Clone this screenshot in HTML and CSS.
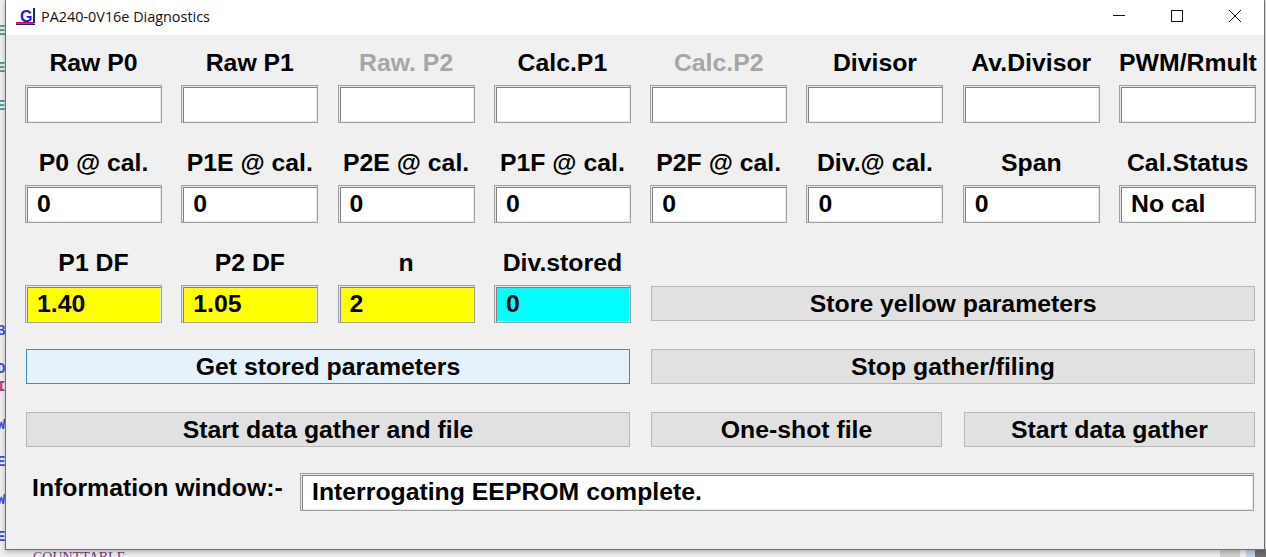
FILE: index.html
```html
<!DOCTYPE html>
<html lang="en">
<head>
    <meta charset="UTF-8">
    <title>PA240-0V16e Diagnostics</title>
    <link rel="stylesheet" href="styles.css">
</head>
<body>
<!-- bits of the code editor that sits behind the dialog -->
<span class="code green l1">E</span>
<span class="code green l2">E</span>
<span class="code green l3">E</span>
<span class="code blue l4">B</span>
<span class="code blue l5">D</span>
<span class="code pink l6">I</span>
<span class="code blue l7">W</span>
<span class="code blue l8">E</span>
<span class="code blue l9">W</span>
<span class="code blue l10">E</span>
<div class="behind">COUNTTABLE</div>
<div class="scrollthumb"></div>
<div class="scrollblue"></div>
<div class="darkedge"></div>

<div class="window">
    <div class="titlebar">
        <svg class="appicon" width="20" height="17" viewBox="0 0 20 17">
            <text x="4" y="13.500" class="icontext">G</text>
            <path d="M17 0h2v15h-2z" fill="#1c1c9c"/>
            <path d="M0 14h17v1.500H0z" fill="#c8102e"/>
            <path d="M0 15.500h19V17H0z" fill="#1c1c9c"/>
        </svg>
        <span class="apptitle">PA240-0V16e Diagnostics</span>
        <div class="winbtns">
            <svg width="58" height="14" viewBox="0 0 58 14"><path d="M23 6.500h12" stroke="#111" fill="none"/></svg>
            <svg width="58" height="14" viewBox="0 0 58 14"><rect x="23.500" y="1.500" width="11" height="11" stroke="#111" fill="none"/></svg>
            <svg width="58" height="14" viewBox="0 0 58 14"><path d="M23 1l12 12M35 1L23 13" stroke="#111" fill="none"/></svg>
        </div>
    </div>

    <div class="content">
        <div class="fields">
            <div class="field"><label>Raw P0</label><div class="box"></div></div>
            <div class="field"><label>Raw P1</label><div class="box"></div></div>
            <div class="field"><label class="off">Raw. P2</label><div class="box"></div></div>
            <div class="field"><label>Calc.P1</label><div class="box"></div></div>
            <div class="field"><label class="off">Calc.P2</label><div class="box"></div></div>
            <div class="field"><label>Divisor</label><div class="box"></div></div>
            <div class="field"><label>Av.Divisor</label><div class="box"></div></div>
            <div class="field"><label>PWM/Rmult</label><div class="box"></div></div>

            <div class="field"><label>P0 @ cal.</label><div class="box">0</div></div>
            <div class="field"><label>P1E @ cal.</label><div class="box">0</div></div>
            <div class="field"><label>P2E @ cal.</label><div class="box">0</div></div>
            <div class="field"><label>P1F @ cal.</label><div class="box">0</div></div>
            <div class="field"><label>P2F @ cal.</label><div class="box">0</div></div>
            <div class="field"><label>Div.@ cal.</label><div class="box">0</div></div>
            <div class="field"><label>Span</label><div class="box">0</div></div>
            <div class="field"><label>Cal.Status</label><div class="box">No cal</div></div>

            <div class="field"><label>P1 DF</label><div class="box yellow">1.40</div></div>
            <div class="field"><label>P2 DF</label><div class="box yellow">1.05</div></div>
            <div class="field"><label>n</label><div class="box yellow">2</div></div>
            <div class="field"><label>Div.stored</label><div class="box cyan">0</div></div>
            <button class="btn store">Store yellow parameters</button>
        </div>

        <div class="btnrow">
            <button class="btn focused">Get stored parameters</button>
            <button class="btn">Stop gather/filing</button>
        </div>
        <div class="btnrow lastrow">
            <button class="btn">Start data gather and file</button>
            <div class="btnpair">
                <button class="btn">One-shot file</button>
                <button class="btn">Start data gather</button>
            </div>
        </div>

        <div class="info">
            <span class="infolabel">Information window:-</span>
            <div class="box infobox">Interrogating EEPROM complete.</div>
        </div>
    </div>
</div>
</body>
</html>
```
FILE: styles.css
```css
*{
    margin: 0;
    padding: 0;
    box-sizing: border-box;
}

html, body{
    width: 1266px;
    height: 557px;
    overflow: hidden;
}

body{
    background-color: #efefef;
    font-family: "Liberation Sans", Arial, sans-serif;
    font-weight: bold;
    color: #000;
    position: relative;
}

/* editor behind the dialog */
.code{
    position: absolute;
    left: -3px;
    font-family: "Liberation Mono", monospace;
    font-size: 14px;
    font-weight: bold;
    line-height: 16px;
}

.l1{ top: 23px; }
.l2{ top: 60px; }
.l3{ top: 98px; }
.l4{ top: 323px; }
.l5{ top: 361px; }
.l6{ top: 379px; }
.l7{ top: 417px; }
.l8{ top: 454px; }
.l9{ top: 492px; }
.l10{ top: 529px; }

.green{
    color: #5f8f7f;
}

.blue{
    color: #4a4ad0;
}

.pink{
    color: #b03a7a;
}

.behind{
    position: absolute;
    left: 33px;
    top: 550px;
    font-family: "Liberation Serif", serif;
    font-size: 14px;
    font-weight: normal;
    color: #7a3b7a;
}

.scrollthumb{
    position: absolute;
    left: 1220px;
    top: 549px;
    width: 20px;
    height: 8px;
    background-color: #cfcfcf;
}

.scrollblue{
    position: absolute;
    left: 1246px;
    top: 549px;
    width: 9px;
    height: 8px;
    background-color: #c5d4e6;
}

.darkedge{
    position: absolute;
    left: 1255px;
    top: 549px;
    width: 11px;
    height: 8px;
    background-color: #6e6e6e;
}

.window{
    position: absolute;
    left: 5px;
    top: 0;
    width: 1260px;
    height: 550px;
    background-color: #f0f0f0;
    border: 1px solid #6e6e6e;
    border-top: none;
    box-shadow: 0 2px 5px rgba(0,0,0,0.25);
}

.titlebar{
    height: 35px;
    background-color: #fff;
    display: flex;
    align-items: center;
    padding: 0 0 3px 10px;
}

.appicon{
    margin-right: 5px;
}

.icontext{
    font-family: "Liberation Sans", sans-serif;
    font-size: 16px;
    font-weight: bold;
    fill: #1a1ae6;
}

.apptitle{
    font-family: "Open Sans", sans-serif;
    font-size: 14.400px;
    font-weight: normal;
    color: #111;
}

.winbtns{
    margin-left: auto;
    display: flex;
}

.content{
    padding: 14px 9px 0 19px;
}

.fields{
    display: grid;
    grid-template-columns: repeat(8, 137px);
    column-gap: 19.300px;
    row-gap: 26px;
}

.field label{
    display: block;
    height: 36px;
    text-align: center;
    font-size: 24.800px;
    line-height: 27px;
    white-space: nowrap;
}

.field label.off{
    color: #a6a6a6;
}

.box{
    height: 38px;
    background-color: #fff;
    border: 1px solid #a0a0a0;
    box-shadow: inset 1px 1px 0 #e8e8e8, inset 2px 2px 0 #808080, inset -1px -1px 0 #e8e8e8;
    padding-left: 11px;
    font-size: 24.800px;
    line-height: 36px;
}

.yellow{
    background-color: #ff0;
}

.cyan{
    background-color: #0ff;
}

.btn{
    height: 35px;
    background-color: #e1e1e1;
    border: 1px solid #b8b8b8;
    font-family: inherit;
    font-weight: bold;
    font-size: 24.800px;
    color: #000;
}

.store{
    grid-column: 5 / 9;
    margin: 37px 1px 0 1px;
}

.btnrow{
    display: grid;
    grid-template-columns: 604px 604px;
    column-gap: 21px;
    align-items: start;
    height: 36px;
    margin: 26px 0 0 1px;
}

.lastrow{
    height: 35px;
    margin-top: 27px;
}

.btnpair{
    display: grid;
    grid-template-columns: 291px 291px;
    column-gap: 22px;
}

.focused{
    background-color: #e5f1fb;
    border-color: #3a8ad6;
}

.info{
    display: flex;
    align-items: center;
    margin-top: 26px;
}

.infolabel{
    width: 275px;
    padding-left: 7px;
    font-size: 24.800px;
    margin-top: -9px;
}

.infobox{
    width: 954px;
}
```
